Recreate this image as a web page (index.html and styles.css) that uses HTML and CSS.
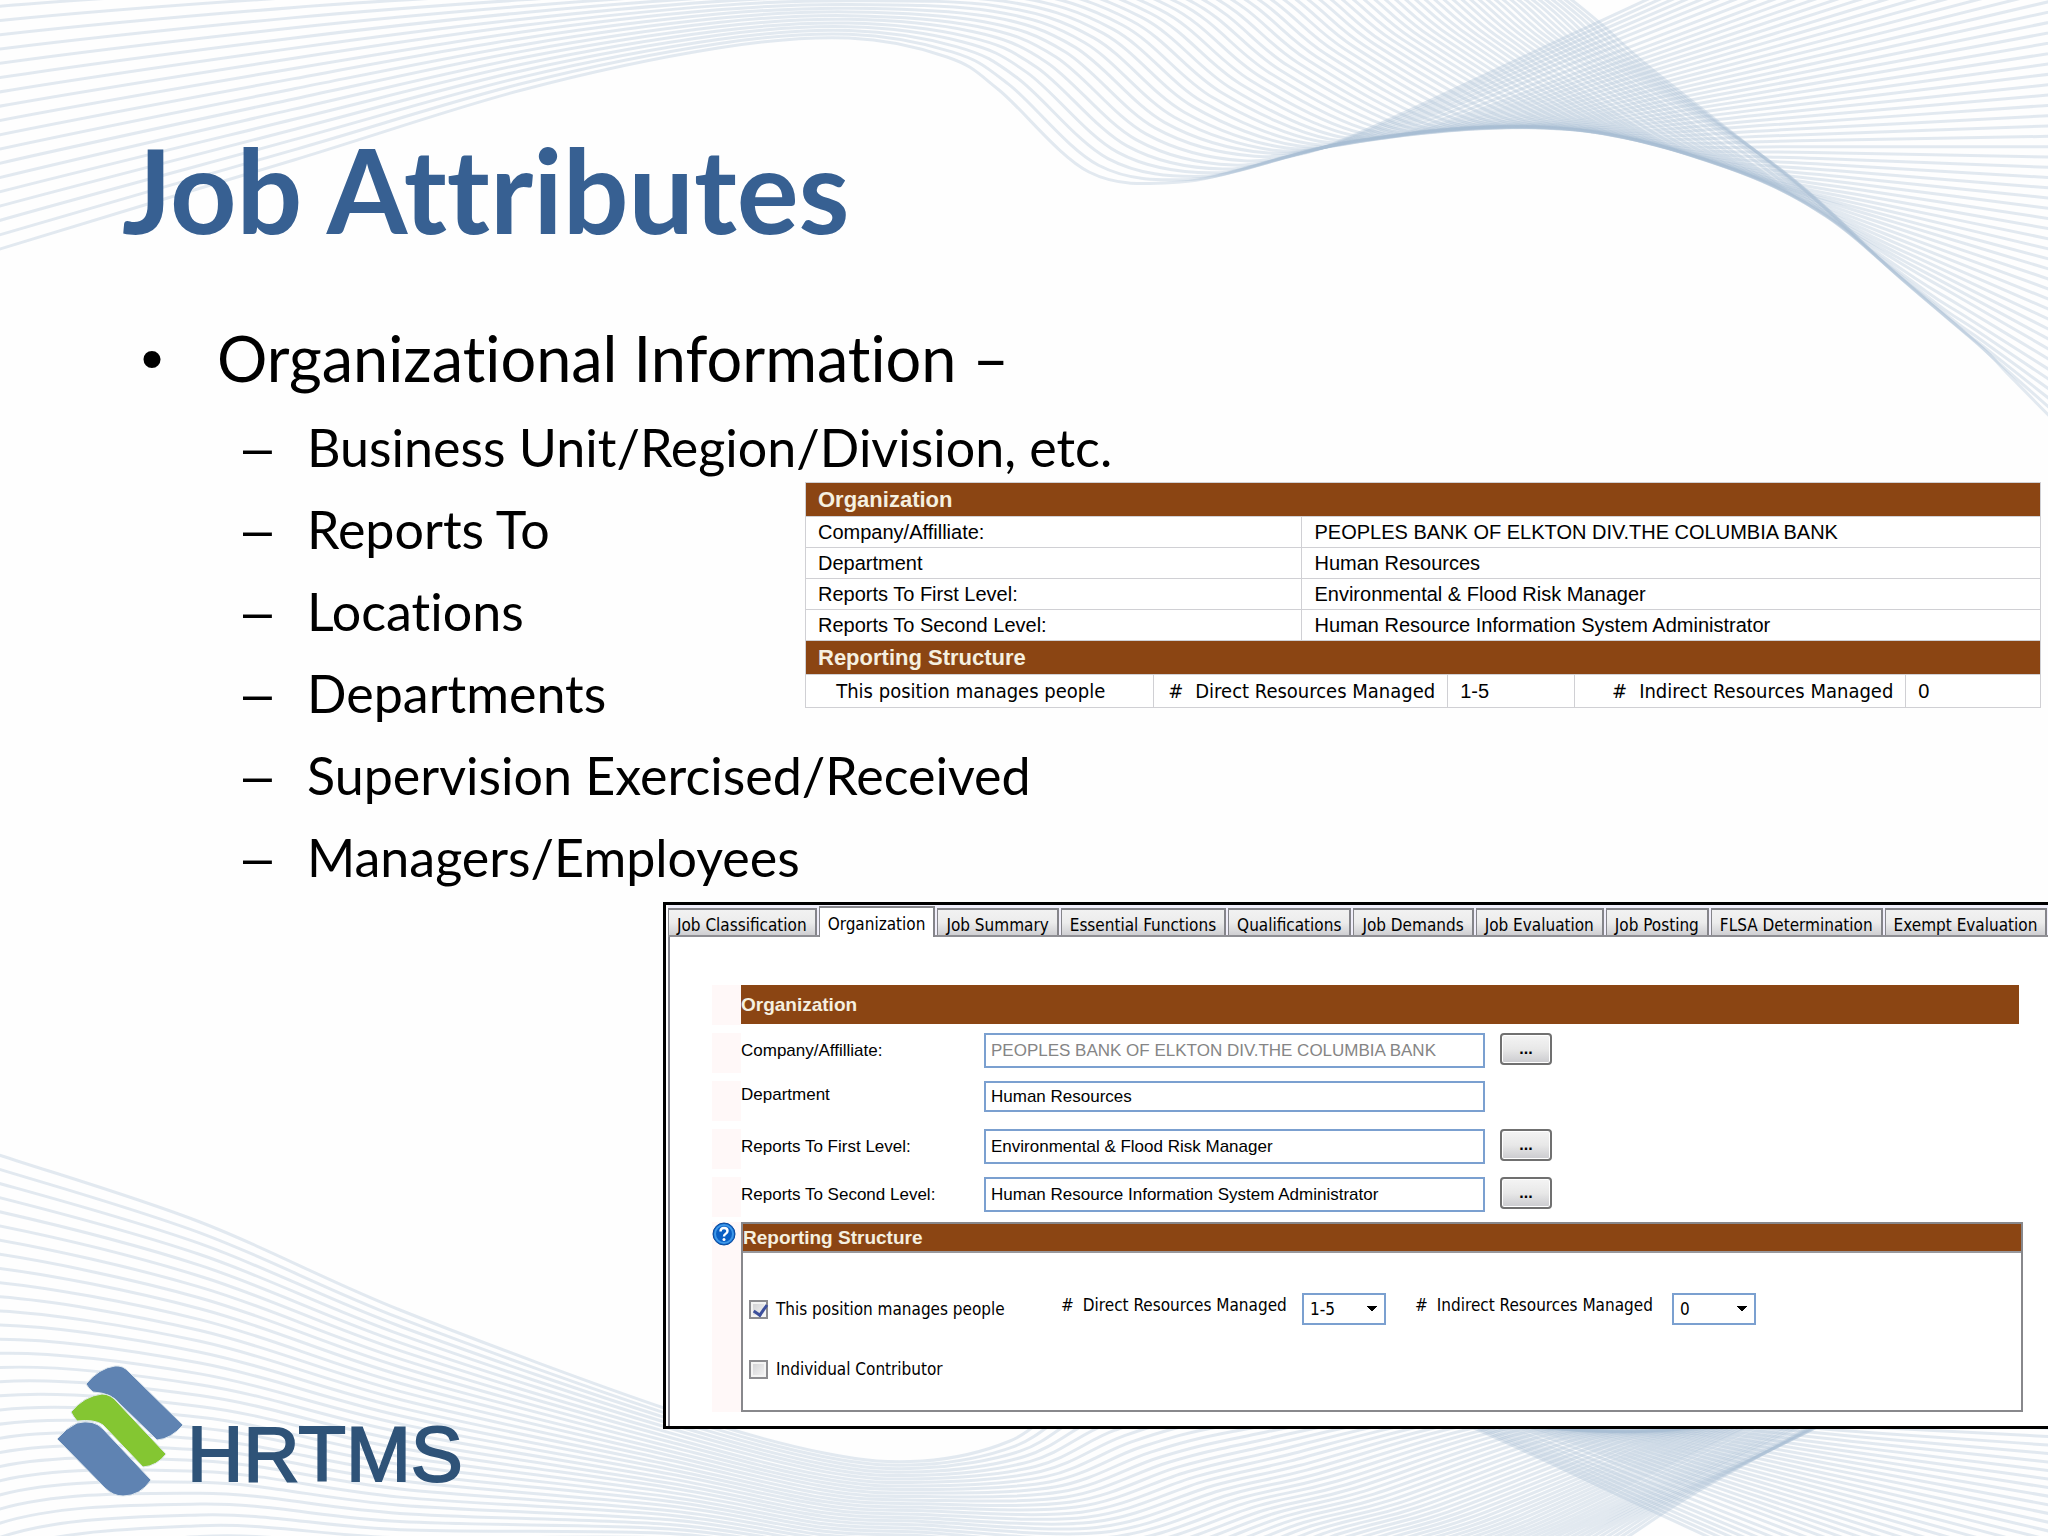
FILE: index.html
```html
<!DOCTYPE html>
<html lang="en">
<head>
    <meta charset="UTF-8">
    <meta name="viewport" content="width=device-width, initial-scale=1.0">
    <title>Job Attributes</title>
    <link rel="stylesheet" href="styles.css">
</head>
<body>
    <main class="slide">
        <svg class="waves" id="waves" viewBox="0 0 2048 1536" preserveAspectRatio="none" aria-hidden="true"></svg>

        <h1 class="title">Job Attributes</h1>

        <section class="content">
            <ul class="topics">
                <li class="topic">Organizational Information –
                    <ul class="subtopics">
                        <li>Business Unit/Region/Division, etc.</li>
                        <li>Reports To</li>
                        <li>Locations</li>
                        <li>Departments</li>
                        <li>Supervision Exercised/Received</li>
                        <li>Managers/Employees</li>
                    </ul>
                </li>
            </ul>

            <table class="summary">
                <colgroup>
                    <col class="col-a"><col class="col-b"><col class="col-c"><col class="col-d"><col class="col-e"><col class="col-f">
                </colgroup>
                <tr><th colspan="6">Organization</th></tr>
                <tr><td colspan="2">Company/Affilliate:</td><td colspan="4">PEOPLES BANK OF ELKTON DIV.THE COLUMBIA BANK</td></tr>
                <tr><td colspan="2">Department</td><td colspan="4">Human Resources</td></tr>
                <tr><td colspan="2">Reports To First Level:</td><td colspan="4">Environmental &amp; Flood Risk Manager</td></tr>
                <tr><td colspan="2">Reports To Second Level:</td><td colspan="4">Human Resource Information System Administrator</td></tr>
                <tr><th colspan="6">Reporting Structure</th></tr>
                <tr class="counts">
                    <td class="manages">This position manages people</td>
                    <td colspan="2" class="count-label"><span class="hash">#</span>Direct Resources Managed</td>
                    <td>1-5</td>
                    <td class="count-label"><span class="hash">#</span>Indirect Resources Managed</td>
                    <td>0</td>
                </tr>
            </table>
        </section>

        <section class="bottom">
            <div class="logo">
                <svg class="logo-mark" viewBox="0 0 126 134" aria-hidden="true">
                    <path class="blue" d="M29 19 Q42 3 58 1 Q66 0 72 7 L126 60 Q114 74 100 75 L63 39 Q55 28 36 27 Q31 23 29 19 Z"/>
                    <path class="green" d="M14 47 Q27 31 45 29 Q54 29 61 38 L109 89 Q100 101 86 102 L46 60 Q38 54 20 56 Q16 51 14 47 Z"/>
                    <path class="blue" d="M0 74 Q9 63 20 58 Q37 54 46 64 L94 115 Q83 131 66 131 Q56 131 48 123 Z"/>
                </svg>
                <span class="logo-text">HRTMS</span>
            </div>

            <div class="panel">
                <nav class="tabs">
                    <button type="button" class="tab">Job Classification</button>
                    <button type="button" class="tab active">Organization</button>
                    <button type="button" class="tab">Job Summary</button>
                    <button type="button" class="tab">Essential Functions</button>
                    <button type="button" class="tab">Qualifications</button>
                    <button type="button" class="tab">Job Demands</button>
                    <button type="button" class="tab">Job Evaluation</button>
                    <button type="button" class="tab">Job Posting</button>
                    <button type="button" class="tab">FLSA Determination</button>
                    <button type="button" class="tab">Exempt Evaluation</button>
                </nav>

                <form class="form">
                    <div class="row">
                        <span class="gutter"></span>
                        <h2 class="bar">Organization</h2>
                    </div>
                    <div class="row">
                        <span class="gutter"></span>
                        <label for="company">Company/Affilliate:</label>
                        <input type="text" id="company" class="field" value="PEOPLES BANK OF ELKTON DIV.THE COLUMBIA BANK" disabled>
                        <button type="button" class="browse">...</button>
                    </div>
                    <div class="row compact">
                        <span class="gutter"></span>
                        <label for="department">Department</label>
                        <input type="text" id="department" class="field" value="Human Resources">
                    </div>
                    <div class="row">
                        <span class="gutter"></span>
                        <label for="first">Reports To First Level:</label>
                        <input type="text" id="first" class="field" value="Environmental &amp; Flood Risk Manager">
                        <button type="button" class="browse">...</button>
                    </div>
                    <div class="row">
                        <span class="gutter"></span>
                        <label for="second">Reports To Second Level:</label>
                        <input type="text" id="second" class="field" value="Human Resource Information System Administrator">
                        <button type="button" class="browse">...</button>
                    </div>
                    <div class="row structure-row">
                        <span class="gutter">
                            <svg class="help" viewBox="0 0 24 24" aria-hidden="true">
                                <circle cx="12" cy="12" r="11" fill="#0a5fc4" stroke="#0b4a9c"/>
                                <circle cx="12" cy="12" r="9" fill="none" stroke="#3f98e8" stroke-width="2"/>
                                <path d="M8.500 9.500 Q8.500 6 12 6 Q15.500 6 15.500 9 Q15.500 11 13.500 12 Q12 12.800 12 14.500" fill="none" stroke="#fff" stroke-width="2.400"/>
                                <circle cx="12" cy="17.500" r="1.500" fill="#fff"/>
                            </svg>
                        </span>
                        <div class="structure">
                            <h2 class="structure-head">Reporting Structure</h2>
                            <div class="options">
                                <div class="option-row">
                                    <label class="check"><input type="checkbox" checked>This position manages people</label>
                                    <label class="count" for="direct"><span class="hash">#</span>Direct Resources Managed</label>
                                    <select id="direct" class="pick"><option>1-5</option></select>
                                    <label class="count second" for="indirect"><span class="hash">#</span>Indirect Resources Managed</label>
                                    <select id="indirect" class="pick"><option>0</option></select>
                                </div>
                                <div class="option-row">
                                    <label class="check"><input type="checkbox">Individual Contributor</label>
                                </div>
                            </div>
                        </div>
                    </div>
                </form>
            </div>
        </section>
    </main>

    <script src="waves.js"></script>
</body>
</html>
```

FILE: styles.css
```css
/* Base styles */
* {
    margin: 0;
    padding: 0;
    box-sizing: border-box;
}

body {
    background: #fefefe;
    color: #000;
    font-family: "Liberation Sans", Arial, sans-serif;
}

.slide {
    position: relative;
    min-height: 100vh;
    padding-top: 122px;
    overflow: hidden;
    isolation: isolate;
}

/* Background line art */
.waves {
    position: absolute;
    inset: 0;
    width: 100%;
    height: 100%;
    z-index: -1;
}

.waves path {
    fill: none;
    stroke: #a9bdd3;
    stroke-opacity: 0.32;
    stroke-width: 3;
}

/* Title and bullets */
.title {
    padding-left: 122px;
    color: #376092;
    font: bold 116px/136px Lato, sans-serif;
    font-variant-ligatures: none;
}

.content {
    display: grid;
    padding-top: 60px;
}

.topics,
.summary {
    grid-area: 1 / 1;
}

.topics {
    padding-left: 217px;
    list-style: none;
    font: 63px/80px Lato, sans-serif;
    font-variant-ligatures: none;
}

.topic::before {
    content: "•";
    float: left;
    margin-left: -76px;
    font-family: "Liberation Sans", Arial, sans-serif;
}

.subtopics {
    padding: 8px 0 0 90px;
    list-style: none;
    font-size: 52px;
    line-height: 82px;
}

.subtopics li::before {
    content: "–";
    float: left;
    margin-left: -64px;
    font-family: "Liberation Sans", Arial, sans-serif;
}

/* Summary table */
.summary {
    justify-self: end;
    align-self: start;
    width: 1236px;
    margin: 164px 7px 0 0;
    table-layout: fixed;
    border-collapse: collapse;
    background: #fff;
    font-size: 20px;
    line-height: 24px;
}

.col-a { width: 28.2%; }
.col-b { width: 12%; }
.col-c { width: 11.8%; }
.col-d { width: 10.3%; }
.col-e { width: 26.8%; }
.col-f { width: 10.9%; }

.summary th {
    height: 34px;
    padding: 0 12px;
    background: #8b4513;
    border: 1px solid #d0d0d4;
    color: #f5f0e0;
    font-size: 22px;
    text-align: left;
}

.summary td {
    height: 31px;
    padding: 0 12px;
    border: 1px solid #d0d0d4;
    white-space: nowrap;
}

.summary .counts td {
    height: 33px;
}

.summary .manages,
.summary .count-label {
    font: 20px/24px "DejaVu Sans Condensed", "DejaVu Sans", sans-serif;
    text-align: right;
}

.summary .manages {
    padding-right: 48px;
}

.hash {
    margin-right: 12px;
}

/* Bottom area */
.bottom {
    display: grid;
    grid-template-columns: 663px 1fr;
    padding-top: 4px;
}

.logo {
    display: flex;
    align-self: end;
    align-items: center;
    gap: 4px;
    margin: 0 0 -70px 57px;
}

.logo-mark {
    width: 126px;
    height: 134px;
}

.logo-mark path {
    stroke: #dfe8ee;
    stroke-width: 1;
}

.blue { fill: #5f83b2; }
.green { fill: #84c632; }

.logo-text {
    padding-top: 44px;
    color: #2f5378;
    font-size: 78px;
    line-height: 76px;
    -webkit-text-stroke: 2px #2f5378;
}

.panel {
    min-width: 0;
    height: 527px;
    border: 3px solid #000;
    border-right: 0;
    background: #fff;
    overflow: hidden;
}

.tabs {
    display: flex;
    align-items: flex-end;
    gap: 2px;
    height: 32px;
    margin-left: 2px;
    border-bottom: 2px solid #8f8f94;
    background: #f1effb;
}

.tab {
    flex: none;
    height: 27px;
    padding: 4px 8px 0;
    border: 1px solid #85858a;
    border-width: 2px 2px 0 1px;
    background: linear-gradient(#f2f2f2, #ececec 50%, #cfcfd2);
    font: 17px/20px "DejaVu Sans Condensed", "DejaVu Sans", sans-serif;
    white-space: nowrap;
}

.tab.active {
    height: 31px;
    padding-bottom: 2px;
    margin-bottom: -2px;
    background: #fff;
}

.form {
    display: flex;
    flex-direction: column;
    gap: 8px;
    height: 100%;
    margin-left: 2px;
    padding: 48px 25px 0 42px;
    border-left: 2px solid #85858f;
    font-size: 17px;
}

.row {
    display: flex;
    align-items: flex-start;
    height: 40px;
    line-height: 35px;
}

.gutter {
    align-self: stretch;
    flex: none;
    width: 29px;
    background: #fff8f8;
}

.bar {
    flex: 1;
    margin-right: 4px;
    background: #8b4513;
    color: #f5f0e0;
    font-size: 19px;
    line-height: 39px;
}

.row > label {
    width: 243px;
}

.field {
    width: 501px;
    height: 35px;
    padding: 0 5px;
    border: 2px solid #7ba0d0;
    background: #fff;
    color: #000;
    font: 17px "Liberation Sans", Arial, sans-serif;
}

.field:disabled {
    color: #858585;
}

.compact {
    line-height: 27px;
}

.compact .field {
    height: 31px;
}

.browse {
    width: 52px;
    height: 32px;
    margin-left: 15px;
    border: 2px solid #707070;
    border-radius: 4px;
    background: linear-gradient(#f4f4f4, #e8e8e8 50%, #cbcbcf);
    box-shadow: inset 0 0 0 1px #fff;
    font: bold 16px "Liberation Sans", Arial, sans-serif;
}

/* Reporting structure box */
.structure-row {
    height: auto;
    margin-top: -3px;
}

.help {
    display: block;
    width: 24px;
    height: 24px;
}

.structure {
    flex: 1;
    height: 190px;
    border: 2px solid #88888c;
}

.structure-head {
    border-bottom: 2px solid #98989c;
    background: #8b4513;
    color: #f5f0e0;
    font-size: 19px;
    line-height: 27px;
}

.options {
    display: flex;
    flex-direction: column;
    gap: 28px;
    padding: 40px 6px 0;
    font: 17px/32px "DejaVu Sans Condensed", "DejaVu Sans", sans-serif;
}

.option-row {
    display: flex;
    align-items: center;
    height: 32px;
}

.check {
    display: flex;
    align-items: center;
    gap: 8px;
    width: 312px;
}

.check input {
    appearance: none;
    width: 19px;
    height: 19px;
    border: 2px solid #8c8c90;
    background: linear-gradient(135deg, #cfcfd2, #f6f6f6);
    box-shadow: inset 0 0 0 2px #f4f4f4;
}

.check input:checked::before {
    content: "";
    display: block;
    width: 6px;
    height: 11px;
    margin: 0 0 0 5px;
    border: solid #3c4f9c;
    border-width: 0 3px 3px 0;
    transform: rotate(35deg);
}

.count {
    width: 241px;
    line-height: 24px;
    align-self: flex-start;
    white-space: nowrap;
}

.count .hash {
    margin-right: 9px;
}

.count.second {
    width: 257px;
    margin-left: 29px;
}

.pick {
    appearance: none;
    width: 84px;
    height: 32px;
    padding: 0 6px;
    border: 2px solid #7ba0d0;
    background: #fff conic-gradient(from -45deg at 50% 100%, #000 90deg, transparent 0) no-repeat right 6px center / 12px 6px;
    color: #000;
    font: 17px "DejaVu Sans Condensed", "DejaVu Sans", sans-serif;
}
```

FILE: waves.js
```js
const waves = document.getElementById('waves');
const LINES = 60;

// Curve that the right-hand lines run along
const ridge = [
    [1100, 190], [1220, 173], [1350, 142], [1494, 127], [1612, 135],
    [1742, 173], [1827, 217], [1906, 283], [1971, 343], [2048, 415], [2150, 520]
];

function ridgeY(x) {
    let i = 1;
    while (i < ridge.length - 3 && ridge[i + 1][0] < x) i++;
    const [p0, p1, p2, p3] = ridge.slice(i - 1, i + 3);
    const u = (x - p1[0]) / (p2[0] - p1[0]);
    const w = p2[0] - p1[0];
    const m1 = (p2[1] - p0[1]) / (p2[0] - p0[0]) * w;
    const m2 = (p3[1] - p1[1]) / (p3[0] - p1[0]) * w;
    return (2*u*u*u - 3*u*u + 1) * p1[1] + (u*u*u - 2*u*u + u) * m1
        + (3*u*u - 2*u*u*u) * p2[1] + (u*u*u - u*u) * m2;
}

// The points where a line touches the ridge, and where it ends
function touch(t) {
    const x = 1270 + 630 * t;
    const y = ridgeY(x);
    const slope = (ridgeY(x + 4) - ridgeY(x - 4)) / 8;
    const off = [x + 80, y + slope * 80 - 3];
    const end = [2068, -195 + 630 * t];
    return [
        [x - 90, y - slope * 90 - 3], [x, y], off,
        [off[0] + (end[0] - off[0]) * 0.3, off[1] + (end[1] - off[1]) * 0.3],
        end
    ];
}

function topLine(t) {
    const bend = t * (1 - t);
    return [
        [-150, 300 - 950 * t], [-10, 252 - 850 * t], [294, 160 - 600 * t],
        [522, 90 - 380 * t], [718, 48 - 250 * t], [849, 38 - 220 * t],
        [947 + 300 * t, 57 - 300 * t],
        [999 + 560 * t, 90 - 100 * t - 250 * bend],
        [1089 + 560 * t, 172 - 105 * t - 300 * bend],
        ...touch(t)
    ];
}

function bottomLine(t) {
    const bend = t * (1 - t);
    return [
        [-150, 1105 + 1200 * t], [-10, 1152 + 850 * t], [200, 1222 + 640 * t],
        [400, 1310 + 480 * t], [670, 1410 + 270 * t], [824, 1453 + 220 * t],
        [922, 1461 + 210 * t],
        [1010 + 300 * t, 1441 + 300 * t],
        [1070 + 530 * t, 1400 + 155 * t + 220 * bend],
        [1150 + 550 * t, 1375 + 115 * t + 300 * bend],
        ...touch(t).map(([x, y]) => [x + 108, 1558 - y])
    ];
}

// Smooth path through the points
function smooth(p) {
    let d = `M${p[0]}`;
    for (let i = 0; i < p.length - 1; i++) {
        const a = p[i - 1] || p[i], b = p[i], c = p[i + 1], e = p[i + 2] || c;
        d += `C${b[0] + (c[0] - a[0]) / 6},${b[1] + (c[1] - a[1]) / 6}`
            + ` ${c[0] - (e[0] - b[0]) / 6},${c[1] - (e[1] - b[1]) / 6} ${c}`;
    }
    return d;
}

for (let i = 0; i < LINES; i++) {
    [topLine, bottomLine].forEach(line => {
        const path = document.createElementNS('http://www.w3.org/2000/svg', 'path');
        path.setAttribute('d', smooth(line(i / (LINES - 1))));
        waves.appendChild(path);
    });
}
```
